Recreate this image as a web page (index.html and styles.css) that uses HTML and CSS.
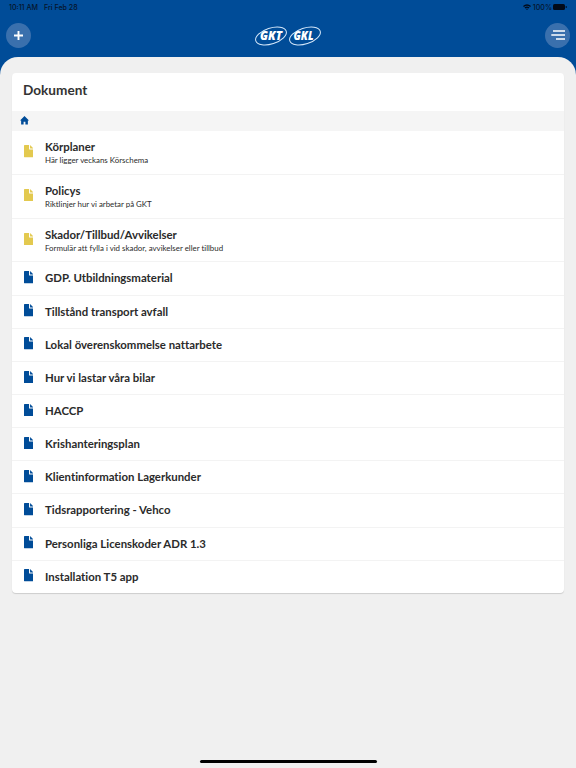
FILE: index.html
```html
<!DOCTYPE html>
<html lang="sv">
<head>
  <meta charset="UTF-8" />
  <meta name="viewport" content="width=device-width, initial-scale=1.0"/>
  <title>Dokument</title>
  <link rel="stylesheet" href="styles.css">
</head>
<body>
  <svg class="sprite" aria-hidden="true">
    <symbol id="file" viewBox="0 0 9.200 12">
      <path d="M.6 0H4.900v3.700q0 .6.6.6H9.200v7.100q0 .6-.6.6H.6Q0 12 0 11.400V.6Q0 0 .6 0z"/>
      <path d="M5.900 0 9.200 3.300H5.900z"/>
    </symbol>
  </svg>

  <header>
    <div class="status-bar">
      <span class="time">10:11 AM</span>
      <span class="date">Fri Feb 28</span>
      <svg class="wifi" viewBox="0 0 8 6">
        <path d="M0 2Q4-1.600 8 2L7.100 3Q4 .4.900 3zM1.500 3.500Q4 1.500 6.500 3.500L5.600 4.400Q4 3.200 2.400 4.400zM3 4.900Q4 4.200 5 4.900L4 6z"/>
      </svg>
      <span class="percent">100%</span>
      <svg class="battery" viewBox="0 0 14 6">
        <rect width="12" height="6" rx="1.600"/>
        <rect x="12.700" y="2" width="1" height="2" rx=".5"/>
      </svg>
    </div>
    <div class="nav">
      <button class="btn">
        <svg width="25" height="25" viewBox="0 0 25 25"><path d="M12.500 8v9M8 12.500h9" stroke-width="1.900"/></svg>
      </button>
      <svg class="logo" width="68" height="22" viewBox="0 0 68 22">
        <ellipse cx="17" cy="11" rx="16" ry="7.900" transform="rotate(-18 17 11)"/>
        <ellipse cx="51" cy="11" rx="16" ry="7.900" transform="rotate(-18 51 11)"/>
        <text x="6" y="15.200" textLength="22" lengthAdjust="spacingAndGlyphs">GKT</text>
        <text x="39.500" y="15.200" textLength="20" lengthAdjust="spacingAndGlyphs">GKL</text>
      </svg>
      <button class="btn">
        <svg width="25" height="25" viewBox="0 0 25 25"><path d="M8 8h12M6.300 12h13.700M11 16h9" stroke-width="1.500"/></svg>
      </button>
    </div>
  </header>

  <main>
    <div class="card">
      <h1>Dokument</h1>
      <div class="breadcrumb">
        <svg width="9" height="9" viewBox="0 0 8 8"><path d="M4 0 8 4H7V7.600H4.800V5.200H3.200V7.600H1V4H0z"/></svg>
      </div>
      <ul>
        <li class="folder"><svg><use href="#file"/></svg><div><h2>Körplaner</h2><p>Här ligger veckans Körschema</p></div></li>
        <li class="folder"><svg><use href="#file"/></svg><div><h2>Policys</h2><p>Riktlinjer hur vi arbetar på GKT</p></div></li>
        <li class="folder"><svg><use href="#file"/></svg><div><h2>Skador/Tillbud/Avvikelser</h2><p>Formulär att fylla i vid skador, avvikelser eller tillbud</p></div></li>
        <li><svg><use href="#file"/></svg><h2>GDP. Utbildningsmaterial</h2></li>
        <li><svg><use href="#file"/></svg><h2>Tillstånd transport avfall</h2></li>
        <li><svg><use href="#file"/></svg><h2>Lokal överenskommelse nattarbete</h2></li>
        <li><svg><use href="#file"/></svg><h2>Hur vi lastar våra bilar</h2></li>
        <li><svg><use href="#file"/></svg><h2>HACCP</h2></li>
        <li><svg><use href="#file"/></svg><h2>Krishanteringsplan</h2></li>
        <li><svg><use href="#file"/></svg><h2>Klientinformation Lagerkunder</h2></li>
        <li><svg><use href="#file"/></svg><h2>Tidsrapportering - Vehco</h2></li>
        <li><svg><use href="#file"/></svg><h2>Personliga Licenskoder ADR 1.3</h2></li>
        <li><svg><use href="#file"/></svg><h2>Installation T5 app</h2></li>
      </ul>
    </div>
    <div class="home-indicator"></div>
  </main>
</body>
</html>
```
FILE: styles.css
```css
* {
  margin: 0;
  padding: 0;
  box-sizing: border-box;
}

body {
  background: #004c98;
  font-family: Lato, sans-serif;
  font-variant-ligatures: none;
  color: #2b2b2b;
  height: 100vh;
  display: flex;
  flex-direction: column;
  overflow: hidden;
}

.sprite {
  display: none;
}

header {
  height: 56.5px;
  flex: none;
}

/* Status bar */
.status-bar {
  display: flex;
  align-items: center;
  height: 14px;
  padding: 0 9px;
  font: 500 7.1px Inter, sans-serif;
  color: #06152c;
}

.date {
  margin-left: 6px;
}

.wifi {
  width: 8px;
  height: 6px;
  margin-left: auto;
}

.percent {
  margin: 0 1px 0 2px;
}

.battery {
  width: 14px;
  height: 6px;
}

.wifi, .battery {
  fill: #020a18;
}

.nav {
  display: flex;
  justify-content: space-between;
  align-items: center;
  height: 43px;
  padding: 0 6px;
}

.btn {
  width: 25px;
  height: 25px;
  border: none;
  border-radius: 50%;
  background: #3a70ad;
  cursor: pointer;
}

.btn svg {
  display: block;
  stroke: #fff;
  fill: none;
}

.logo ellipse {
  fill: none;
  stroke: #d5e8fa;
  stroke-width: 1;
}

.logo text {
  font: italic 900 11.5px "Open Sans", sans-serif;
  fill: #fff;
}

/* Content */
main {
  flex: 1;
  display: flex;
  flex-direction: column;
  padding: 16.5px 12px 5px;
  background: #f0f0f0;
  border-radius: 18px 18px 0 0;
}

.card {
  background: #fff;
  border-radius: 4px;
  box-shadow: 0 1px 1px rgba(0,0,0,0.15);
  overflow: hidden;
}

h1 {
  height: 37.5px;
  padding-left: 11px;
  font-size: 13.6px;
  line-height: 34px;
  font-weight: 700;
  color: #333;
}

.breadcrumb {
  height: 20.5px;
  display: flex;
  align-items: center;
  padding: 0 0 1px 8px;
  background: #f5f5f5;
}

.breadcrumb svg {
  fill: #004c98;
}

ul {
  list-style: none;
}

li {
  display: flex;
  align-items: center;
  gap: 12px;
  height: 33.15px;
  padding-left: 11.5px;
  border-bottom: 1px solid #f3f3f3;
}

li:last-child {
  height: 32px;
  border-bottom: none;
}

li svg {
  width: 9.5px;
  height: 12.5px;
  margin-bottom: 2px;
  fill: #004c98;
}

li.folder {
  height: 43.8px;
}

.folder svg {
  margin-bottom: 2px;
  fill: #e3c94f;
}

.folder div {
  padding-top: 2px;
}

h2 {
  font-size: 11.4px;
  line-height: 14px;
  font-weight: 700;
}

p {
  font-size: 7.9px;
  line-height: 12px;
}

.home-indicator {
  width: 177px;
  height: 3px;
  margin: auto auto 0;
  border-radius: 2px;
  background: #000;
}
```
